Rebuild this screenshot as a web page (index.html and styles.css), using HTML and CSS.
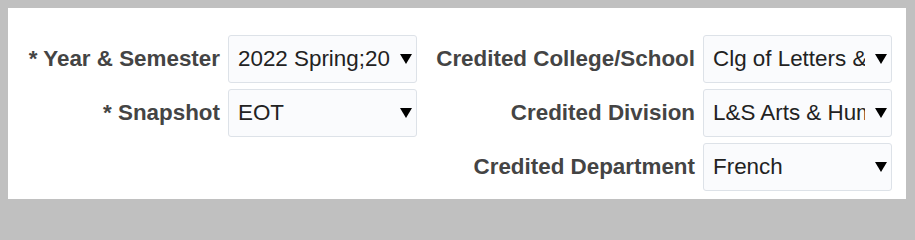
FILE: index.html
```html
<!DOCTYPE html>
<html lang="en">
<head>
<meta charset="utf-8">
<title>Filters</title>
<link rel="stylesheet" href="styles.css">
</head>
<body>
<div class="card">
  <div class="form">
    <div class="col col-left">
      <label class="lbl">* Year &amp; Semester</label>
      <div class="sel"><span class="val">2022 Spring;2022 Summer</span><span class="arrow"></span></div>
      <label class="lbl">* Snapshot</label>
      <div class="sel"><span class="val">EOT</span><span class="arrow"></span></div>
    </div>
    <div class="col col-right">
      <label class="lbl">Credited College/School</label>
      <div class="sel"><span class="val">Clg of Letters &amp; Science</span><span class="arrow"></span></div>
      <label class="lbl">Credited Division</label>
      <div class="sel"><span class="val">L&amp;S Arts &amp; Humanities</span><span class="arrow"></span></div>
      <label class="lbl">Credited Department</label>
      <div class="sel"><span class="val">French</span><span class="arrow"></span></div>
    </div>
  </div>
</div>
</body>
</html>
```
FILE: styles.css
```css
html {
  background: #c0c0c0;
}
html, body {
  margin: 0;
  padding: 0;
}
body {
  background: #c0c0c0;
  padding: 8px 9px 7px 8px;
  font-family: "Liberation Sans", Arial, sans-serif;
}
.card {
  background: #ffffff;
  height: 191px;
  box-sizing: border-box;
  padding: 27px 14px 0 14px;
}
.form {
  display: flex;
  gap: 12px;
}
.col {
  display: grid;
  grid-template-columns: var(--lw) 189px;
  grid-auto-rows: 48px;
  column-gap: 8px;
  row-gap: 6px;
  align-items: center;
}
.col-left { --lw: 198px; }
.col-right { --lw: 266px; }
.lbl {
  font-size: 22.4px;
  font-weight: bold;
  color: #444444;
  text-align: right;
  white-space: nowrap;
}
.sel {
  height: 48px;
  box-sizing: border-box;
  border: 1px solid #dde2e8;
  border-radius: 3px;
  background: #fafbfd;
  display: flex;
  align-items: center;
  position: relative;
  padding: 0 26px 0 9px;
}
.val {
  font-size: 22.4px;
  color: #222222;
  white-space: nowrap;
  overflow: hidden;
  flex: 1;
  min-width: 0;
}
.arrow {
  position: absolute;
  right: 4px;
  top: 50%;
  margin-top: -5px;
  width: 0;
  height: 0;
  border-left: 6px solid transparent;
  border-right: 6px solid transparent;
  border-top: 10px solid #000000;
}
```
